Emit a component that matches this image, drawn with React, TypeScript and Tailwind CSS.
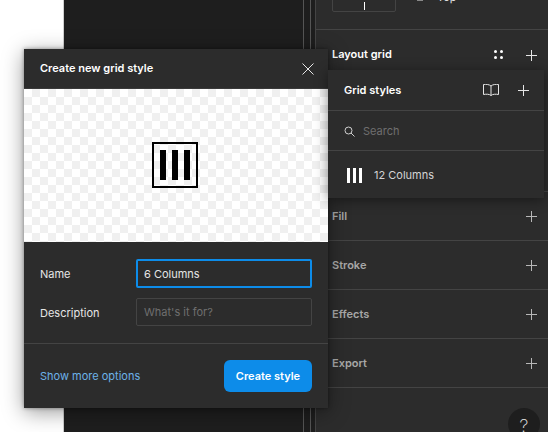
const font = "font-['Inter',sans-serif]";

function Plus({ className = 'text-[#e6e6e6]' }: { className?: string }) {
  return (
    <svg width="12" height="12" viewBox="0 0 12 12" className={className}>
      <path d="M6 0.5V11.5M0.5 6H11.5" stroke="currentColor" strokeWidth="1" fill="none" shapeRendering="crispEdges" />
    </svg>
  );
}

function PanelRow({ label }: { label: string }) {
  return (
    <div className="flex h-[49px] items-center justify-between border-b border-[#444444] pl-[16px] pr-[11px]">
      <span className="text-[11px] font-semibold text-[#a8a8a8]">{label}</span>
      <Plus className="text-[#b8b8b8]" />
    </div>
  );
}

function GridPopover() {
  return (
    <div className="absolute left-[328px] top-[70px] w-[216px] bg-[#2c2c2c] shadow-[0_2px_12px_rgba(0,0,0,0.45)]">
      <div className="flex h-[41px] items-center justify-between border-b border-[#444444] pl-[16px] pr-[15px]">
        <span className="text-[11px] font-semibold text-white">Grid styles</span>
        <div className="flex items-center gap-[17px]">
          <svg width="18" height="12" viewBox="0 0 18 12" fill="none" stroke="#e6e6e6" strokeWidth="1">
            <path d="M9 2C7.5 0.5 4 0 1.5 0.5V10.5C4 10 7.5 10 9 11.5C10.5 10 14 10 16.5 10.5V0.5C14 0 10.5 0.5 9 2ZM9 2V11.5" />
          </svg>
          <Plus />
        </div>
      </div>
      <div className="flex h-[40px] items-center gap-[8px] border-b border-[#444444] pl-[16px] pt-[2px]">
        <svg width="11" height="11" viewBox="0 0 11 11" fill="none" stroke="#d0d0d0" strokeWidth="1">
          <circle cx="4.5" cy="4.5" r="3.5" />
          <path d="M7 7L10.5 10.5" />
        </svg>
        <span className="text-[11px] text-[#6f6f6f]">Search</span>
      </div>
      <div className="flex h-[47px] items-center gap-[12px] pl-[19px] pt-[2px]">
        <div className="flex gap-[3px]">
          <div className="h-[15px] w-[3px] bg-white" />
          <div className="h-[15px] w-[3px] bg-white" />
          <div className="h-[15px] w-[3px] bg-white" />
        </div>
        <span className="text-[11px] text-[#d4d4d4]">12 Columns</span>
      </div>
    </div>
  );
}

function StyleModal() {
  return (
    <div className="absolute left-[24px] top-[49px] w-[304px] bg-[#2c2c2c] shadow-[0_4px_20px_rgba(0,0,0,0.4),0_0_4px_rgba(0,0,0,0.4)]">
      <div className="flex h-[40px] items-center justify-between border-b border-[#3a3a3a] pl-[16px] pr-[14px]">
        <span className="text-[11px] font-semibold text-white">Create new grid style</span>
        <svg width="12" height="12" viewBox="0 0 12 12" fill="none" stroke="#e6e6e6" strokeWidth="1">
          <path d="M0.5 0.5L11.5 11.5M11.5 0.5L0.5 11.5" />
        </svg>
      </div>
      <div className="flex h-[153px] items-center justify-center bg-white bg-[repeating-conic-gradient(#f0f0f0_0_25%,#ffffff_0_50%)] bg-[length:16px_16px] pb-[1px] pr-[2px]">
        <div className="flex h-[46px] w-[46px] items-center justify-center gap-[6px] border-[2px] border-black">
          <div className="h-[30px] w-[6px] bg-black" />
          <div className="h-[30px] w-[6px] bg-black" />
          <div className="h-[30px] w-[6px] bg-black" />
        </div>
      </div>
      <div className="flex flex-col gap-[10px] border-b border-[#444444] pb-[17px] pl-[16px] pr-[16px] pt-[17px]">
        <div className="flex items-center">
          <span className="w-[96px] pt-[2px] text-[11px] text-[#e6e6e6]">Name</span>
          <div className="flex h-[29px] flex-1 items-center rounded-[2px] border-[2px] border-[#0d8ce9] pl-[6px] pt-[2px] text-[11px] text-[#e6e6e6]">
            6 Columns
          </div>
        </div>
        <div className="flex items-center">
          <span className="w-[96px] pt-[2px] text-[11px] text-[#e6e6e6]">Description</span>
          <div className="flex h-[28px] flex-1 items-center rounded-[2px] border border-[#444444] pl-[7px] text-[11px] text-[#6f6f6f]">
            What's it for?
          </div>
        </div>
      </div>
      <div className="flex h-[64px] items-center justify-between pl-[16px] pr-[16px]">
        <span className="text-[11px] text-[#6cb2e8]">Show more options</span>
        <div className="flex h-[32px] w-[88px] items-center justify-center rounded-[6px] bg-[#0d8ce9] text-[11px] font-semibold text-white">
          Create style
        </div>
      </div>
    </div>
  );
}

export default function App() {
  return (
    <div className={`${font} relative flex h-[432px] w-[548px] overflow-hidden bg-white`}>
      <div className="w-[63px] shrink-0 border-r border-[#cfcfcf] box-content" />
      <div className="flex flex-1 justify-end gap-[6px] bg-[#1e1e1e] pr-[4px]">
        <div className="w-px bg-[#555555]" />
        <div className="w-px bg-[#555555]" />
      </div>
      <div className="w-[233px] shrink-0 border-l border-[#444444] bg-[#2c2c2c]">
        <div className="flex h-[30px] items-end gap-[21px] overflow-hidden border-b border-[#444444] pb-[17px] pl-[16px]">
          <div className="flex h-[24px] w-[64px] shrink-0 items-center justify-center rounded-[2px] border border-[#444444]">
            <div className="mt-[12px] h-[8px] w-px bg-white" />
          </div>
          <div className="mb-[8px] flex h-[14px] items-center gap-[14px] text-[11px] text-[#e6e6e6]">
            <div className="h-[8px] w-[6px] bg-[#888888]" />
            <span>Top</span>
          </div>
        </div>
        <div className="flex h-[49px] items-center justify-between pl-[16px] pr-[11px]">
          <span className="text-[11px] font-semibold text-white">Layout grid</span>
          <div className="flex items-center gap-[22px]">
            <div className="mb-[1px] grid grid-cols-2 gap-[3px]">
              <div className="h-[3px] w-[3px] rounded-full bg-white" />
              <div className="h-[3px] w-[3px] rounded-full bg-white" />
              <div className="h-[3px] w-[3px] rounded-full bg-white" />
              <div className="h-[3px] w-[3px] rounded-full bg-white" />
            </div>
            <Plus />
          </div>
        </div>
        <div className="h-[113px] border-b border-[#444444]" />
        <PanelRow label="Fill" />
        <PanelRow label="Stroke" />
        <PanelRow label="Effects" />
        <PanelRow label="Export" />
      </div>
      <StyleModal />
      <GridPopover />
      <div className="absolute left-[508px] top-[408px] flex h-[32px] w-[32px] items-start justify-center rounded-full bg-[#1e1e1e] pt-[4px] text-[18px] font-extralight text-[#e6e6e6]">
        ?
      </div>
    </div>
  );
}
